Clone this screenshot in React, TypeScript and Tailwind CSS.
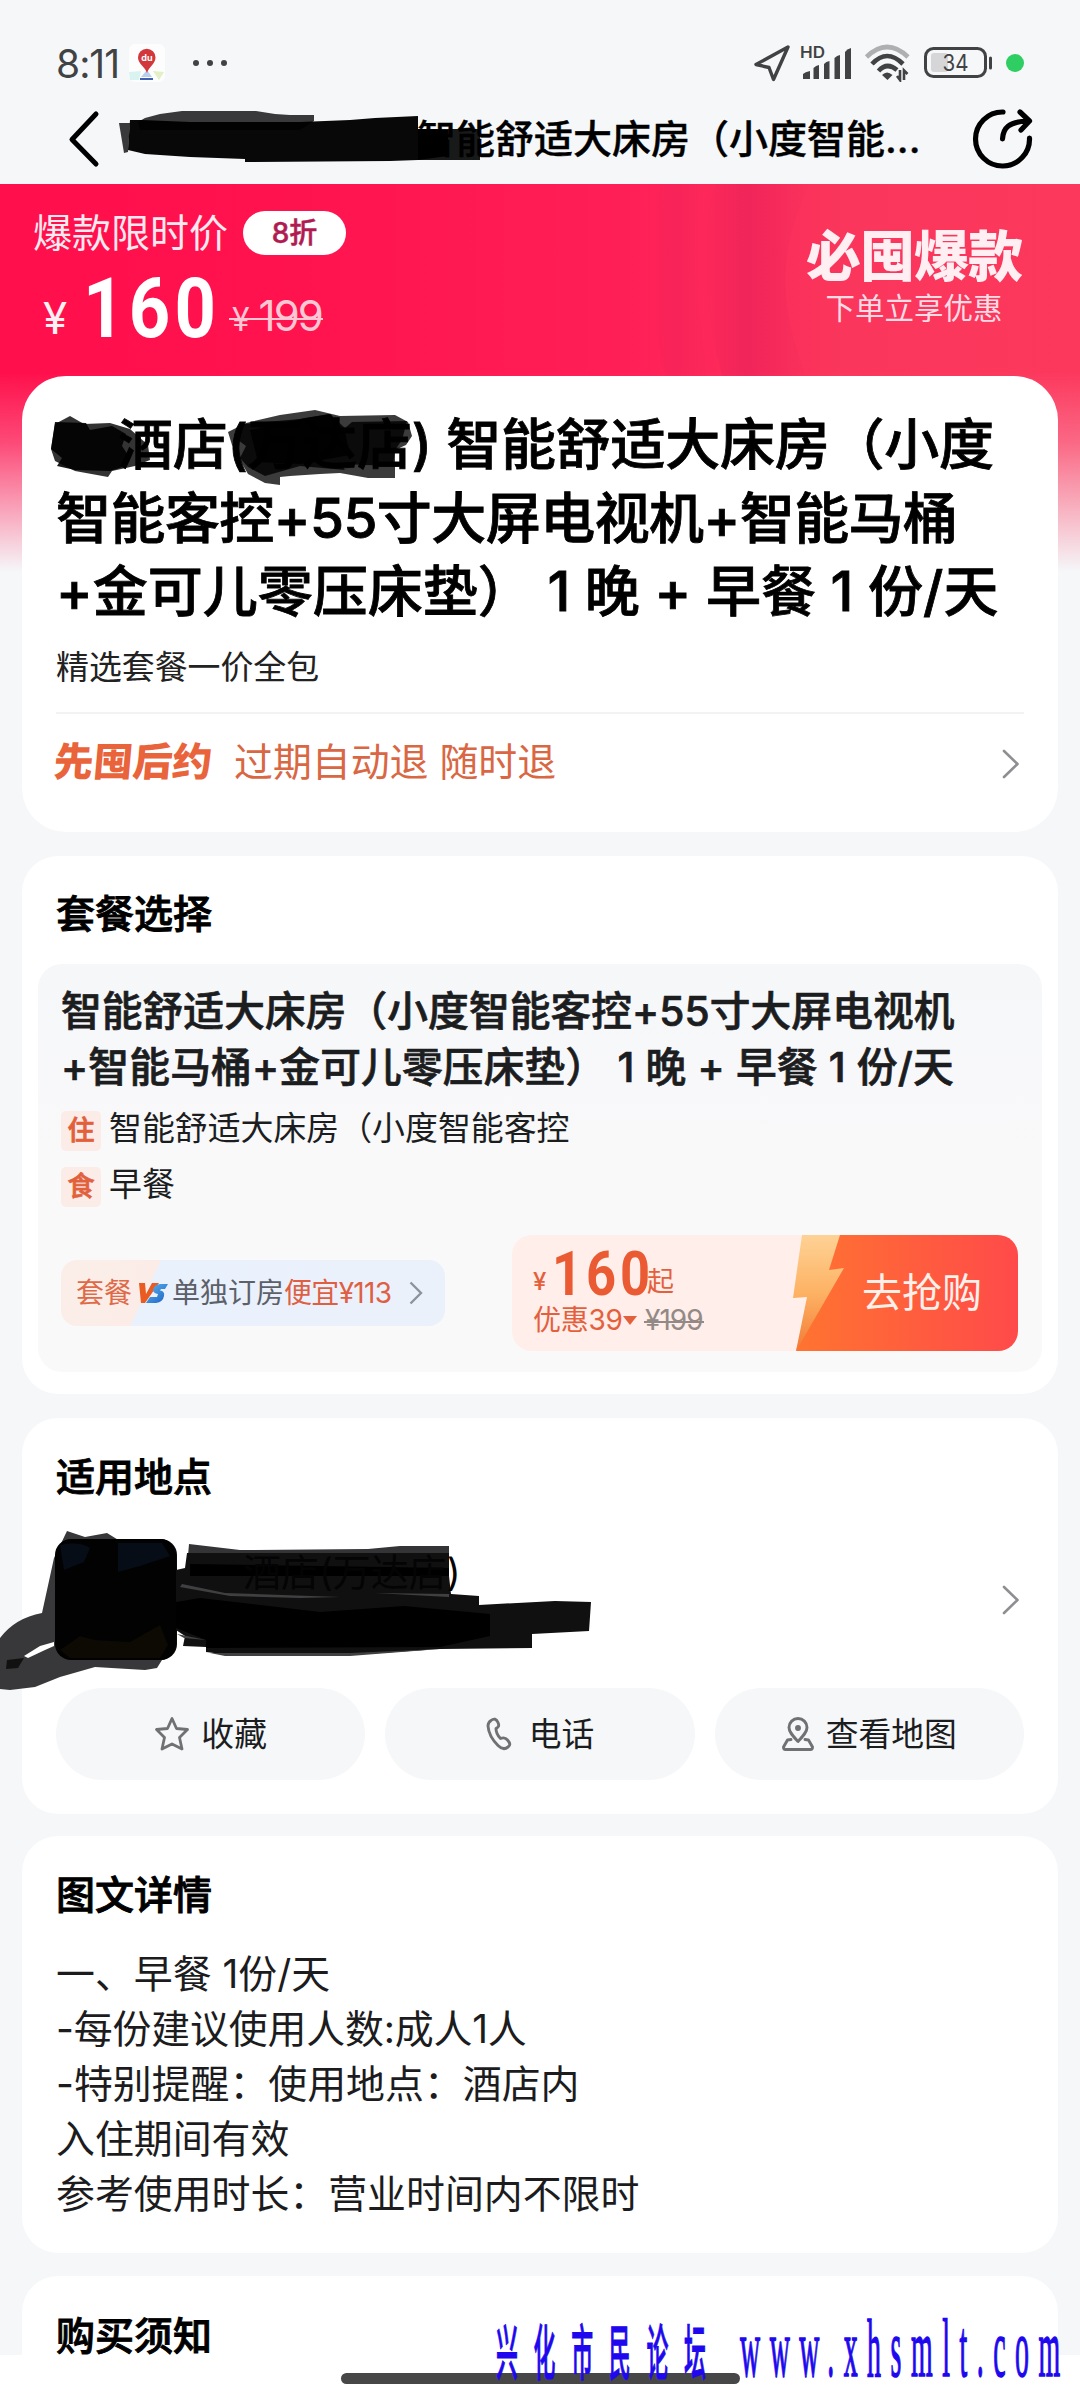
import React from "react";

const FONT = "font-['Inter','Noto_Sans_CJK_SC',sans-serif]";

function Chevron({ className }: { className?: string }) {
  return (
    <svg className={className} width="18" height="30" viewBox="0 0 18 30" fill="none" stroke="#8f8f93" strokeWidth="2.6" strokeLinecap="round" strokeLinejoin="round">
      <path d="M2 2 L15.5 15 L2 28" />
    </svg>
  );
}

function StatusBar() {
  return (
    <div className="flex h-[94px] items-center pt-[32px] pl-[56px] pr-[56px] text-[#414244]">
      <span className="w-[63px] text-[39px] leading-none tracking-[-1px]">8:11</span>
      <svg className="ml-[10px]" width="36" height="38" viewBox="0 0 36 38">
        <rect width="36" height="38" rx="6" fill="#fdfdfd" />
        <path d="M0 28 L12 27 L10 36 L1 36Z" fill="#d9f3f1" />
        <path d="M24 27 L35 28 L30 36Z" fill="#e3efc4" />
        <path d="M18 26 L23 33 H12Z" fill="#b9cfee" />
        <path d="M11 34 H24 V36 H11Z" fill="#3f62b0" />
        <path d="M18 29 C16.500 23 9 20 9 13.500 A8.700 8.700 0 0 1 26.500 13.500 C26.500 20 19.500 23 18 29Z" fill="#d2373b" />
        <text x="18" y="17" textAnchor="middle" fontSize="9" fontWeight="700" fill="#fff" fontFamily="Inter">du</text>
      </svg>
      <div className="ml-[28px] flex gap-[8px]">
        <i className="size-[6px] rounded-full bg-[#414244]" />
        <i className="size-[6px] rounded-full bg-[#414244]" />
        <i className="size-[6px] rounded-full bg-[#414244]" />
      </div>
      <div className="ml-auto flex items-center">
        <svg width="38" height="38" viewBox="0 0 38 38" fill="none" stroke="#414244" strokeWidth="3.4" strokeLinejoin="round">
          <path d="M35 3 L3 20.500 L16 23.500 L20.500 35.500Z" />
        </svg>
        <svg className="ml-[8px] overflow-visible" width="54" height="36" viewBox="0 0 54 36">
          <text x="1" y="13" fontSize="15.500" fontWeight="600" fill="#414244" fontFamily="Inter" textLength="25" lengthAdjust="spacingAndGlyphs">HD</text>
          <g fill="#414244">
            <path d="M4 34 V29 Q6 27 11 26 V34Z" />
            <path d="M14.500 34 V23 Q17 20.500 20 20 V34Z" />
            <path d="M25 34 V19 Q27 16.500 30.500 16 V34Z" />
            <path d="M35.500 34 V13 Q38 10.500 41 10 V34Z" />
            <path d="M46 34 V7 Q48 4 52 3 V34Z" />
          </g>
        </svg>
        <svg className="ml-[11px]" width="48" height="38" viewBox="0 0 48 38" fill="none" strokeWidth="4.600">
          <path d="M2.500 13 Q23 -7 44 13" stroke="#aeafb1" />
          <path d="M8 20 Q23 4 39 20" stroke="#414244" />
          <path d="M14.500 27 Q23 17.500 33 26" stroke="#414244" />
          <path d="M18 31 Q23 26 28.500 31 L23.500 36Z" fill="#414244" />
          <path d="M36 26 V36 L33 32 M40 36 V26.500 L43.500 30" stroke="#414244" strokeWidth="2.600" />
        </svg>
        <svg className="ml-[12px]" width="70" height="32" viewBox="0 0 70 32">
          <rect x="1.500" y="1.500" width="60" height="28" rx="8" fill="none" stroke="#414244" strokeWidth="3" />
          <rect x="7" y="6" width="17" height="19" rx="3" fill="#d6d6d8" />
          <path d="M66.500 11 V21" stroke="#414244" strokeWidth="3" strokeLinecap="round" />
          <text x="31.500" y="24" textAnchor="middle" fontSize="23" fill="#414244" fontFamily="Inter" textLength="26" lengthAdjust="spacingAndGlyphs">34</text>
        </svg>
        <i className="ml-[12px] size-[18px] rounded-full bg-[#2fce62]" />
      </div>
    </div>
  );
}

function NavBar() {
  return (
    <div className="flex h-[90px] items-center pl-[67px] pr-[44px]">
      <svg width="34" height="58" viewBox="0 0 34 58" fill="none" stroke="#000" strokeWidth="5" strokeLinecap="round" strokeLinejoin="round">
        <path d="M29 4 L5 29.500 L29 54" />
      </svg>
      <div className="ml-[316px] w-[508px] whitespace-nowrap text-[39px] font-medium leading-[50px] text-black [-webkit-text-stroke:0.4px_#000]">智能舒适大床房（小度智能...</div>
      <svg className="ml-auto" width="64" height="62" viewBox="0 0 64 62" fill="none" stroke="#000" strokeWidth="5.200" strokeLinecap="round" strokeLinejoin="round">
        <path d="M31 4 A27 27 0 1 0 57.500 30" />
        <path d="M30.500 31 C31 20 37 13.500 56 13 M48 4 L57.500 13 L49 22" />
      </svg>
    </div>
  );
}

function Hero() {
  return (
    <div className="relative h-[192px]">
      <div className="absolute inset-x-0 top-0 h-[388px] overflow-hidden bg-[linear-gradient(90deg,#ff0f4b_0%,#ff124e_25%,#ff1f57_58%,#fa365c_78%,#fc385d_100%)]">
        <svg width="1080" height="388" viewBox="0 0 1080 388" fill="none">
          <defs>
            <linearGradient id="arcA" x1="0" x2="1">
              <stop offset="0" stopColor="#e8205a" stopOpacity="0" />
              <stop offset=".4" stopColor="#e8205a" stopOpacity=".6" />
              <stop offset="1" stopColor="#e8205a" stopOpacity="0" />
            </linearGradient>
          </defs>
          <path d="M715 0 C695 60 705 140 725 200 L810 200 C775 120 780 60 810 0Z" fill="url(#arcA)" />
          <path d="M660 0 C646 60 650 140 668 200 L710 200 C695 120 690 60 700 0Z" fill="url(#arcA)" opacity=".5" />
        </svg>
        <div className="absolute inset-x-0 bottom-0 h-[200px] bg-[linear-gradient(180deg,rgba(245,247,249,0)_0%,rgba(245,247,249,.25)_35%,rgba(245,247,249,1)_100%)]" />
      </div>
      <div className="relative flex justify-between pl-[33px] pr-[56px]">
        <div>
          <div className="mt-[26px] flex items-center">
            <span className="w-[210px] whitespace-nowrap text-[39px] leading-[46px] text-[#ffe9f0]">爆款限时价</span>
            <span className="flex h-[44px] w-[103px] items-center justify-center rounded-full bg-white text-[28px] font-medium leading-none text-[#b01c52] [-webkit-text-stroke:0.5px_#b01c52]">8折</span>
          </div>
          <div className="mt-[14px] flex h-[76px] items-center text-[#fff0f4]">
            <span className="ml-[10px] mt-[19px] inline-block w-[40px] text-[44px] leading-none">¥</span>
            <span className="w-[130px] origin-left font-['Roboto'] text-[84px] font-bold leading-none tracking-[5px] text-white [transform:translateY(1px)_scaleX(.86)]">160</span>
            <span className="relative ml-[19px] mt-[16px] text-[42px] leading-none tracking-[-2px] text-[#ffc6d4]">
              <span className="mr-[11px] inline-block text-[32px]">¥</span>199
              <i className="absolute -left-[3px] -right-[1px] top-[23px] h-[2px] bg-[#ffc6d4]" />
            </span>
          </div>
        </div>
        <div className="flex w-[220px] flex-col items-center pt-[44px]">
          <div className="whitespace-nowrap text-[55px] font-black leading-[56px] tracking-[-1px] text-[#ffeef2]">必囤爆款</div>
          <div className="mt-[7px] whitespace-nowrap text-[29.500px] leading-[34px] text-[#ffdbe4]">下单立享优惠</div>
        </div>
      </div>
    </div>
  );
}

function TitleCard() {
  return (
    <section className="relative mx-[22px] h-[456px] rounded-[44px] bg-white px-[34px] pt-[32px]">
      <h1 className="whitespace-nowrap text-[55px] font-medium leading-[73.500px] text-black [-webkit-text-stroke:0.8px_#000]">
        <div className="pl-[62px] tracking-[-0.250px]">酒店(万达店) 智能舒适大床房（小度</div>
        <div className="tracking-[-0.550px]">智能客控+55寸大屏电视机+智能马桶</div>
        <div>+金可儿零压床垫） 1 晚 + 早餐 1 份/天</div>
      </h1>
      <p className="mt-[18px] text-[32.900px] leading-[40px] text-[#222]">精选套餐一价全包</p>
      <hr className="mt-[25px] border-t-2 border-[#f3f3f4]" />
      <div className="mt-[22px] flex h-[52px] items-center text-[#d96744]">
        <b className="-ml-[2px] inline-block w-[180px] whitespace-nowrap text-[39.500px] font-black leading-[52px] text-[#e9633b] [transform:skewX(-5deg)]">先囤后约</b>
        <span className="text-[38.900px] leading-[52px]">过期自动退 随时退</span>
        <Chevron className="ml-auto mr-[4px] mt-[5px]" />
      </div>
    </section>
  );
}

function Badge({ children }: { children: React.ReactNode }) {
  return <span className="mt-[1px] flex size-[40px] items-center justify-center rounded-[5px] bg-[#fbece8] text-[27px] font-medium leading-none text-[#e2603c] [-webkit-text-stroke:0.7px_#e2603c]">{children}</span>;
}

function SectionTitle({ children }: { children: React.ReactNode }) {
  return <h2 className="text-[39px] font-medium leading-[50px] text-black [-webkit-text-stroke:0.9px_#000]">{children}</h2>;
}

function PackageCard() {
  return (
    <section className="mx-[22px] mt-[24px] h-[538px] rounded-[36px] bg-white px-[16px] pt-[33px]">
      <div className="ml-[18px]">
        <SectionTitle>套餐选择</SectionTitle>
      </div>
      <div className="mt-[25px] h-[408px] rounded-[24px] bg-[linear-gradient(180deg,#f6f7f9_0%,#f9f9fa_50%,#f9f9f9_100%)] pl-[23px] pr-[24px] pt-[20px]">
        <div className="whitespace-nowrap text-[40.700px] font-medium leading-[55.500px] text-[#1c1d1f] [-webkit-text-stroke:0.7px_#1c1d1f]">
          <div className="tracking-[0.100px]">智能舒适大床房（小度智能客控+55寸大屏电视机</div>
          <div className="tracking-[0.200px]">+智能马桶+金可儿零压床垫） 1 晚 + 早餐 1 份/天</div>
        </div>
        <div className="mt-[15px] flex h-[40px] items-center gap-[8px] text-[32.900px] leading-[40px] text-[#1c1d1f]">
          <Badge>住</Badge>
          <span className="-mt-[5px]">智能舒适大床房（小度智能客控</span>
        </div>
        <div className="mt-[16px] flex h-[40px] items-center gap-[8px] text-[32.900px] leading-[40px] text-[#1c1d1f]">
          <Badge>食</Badge>
          <span className="-mt-[5px]">早餐</span>
        </div>
        <div className="mt-[29px] flex items-center justify-between">
          <div className="flex h-[66px] w-[384px] items-center rounded-[16px] bg-[linear-gradient(115deg,#fbeee9_0%,#fbece7_24%,#e9f1fc_24.300%,#ebf1fb_100%)] pl-[15px] text-[28px] leading-[40px]">
            <span className="text-[#df6a47]">套餐</span>
            <svg className="mx-[3px]" width="34" height="24" viewBox="0 0 34 24">
              <defs>
                <linearGradient id="vs" x1="0" x2="1" y1="0" y2="1"><stop offset="0" stopColor="#5db7ee" /><stop offset="1" stopColor="#1c5fc4" /></linearGradient>
              </defs>
              <path d="M4 2 H10 L11 13 L17 2 H24 L10 22 H6Z" fill="#ea5b22" />
              <path d="M33 3 H25 Q19 4 18 9 Q18 12 23 13 L22 16 H15 L11 22 H21 Q28 21 29 15 Q30 10 25 9.500 L26 8 H30Z" fill="url(#vs)" />
            </svg>
            <span className="text-[#5c6069]">单独订房</span>
            <span className="whitespace-nowrap tracking-[-0.700px] text-[#df5f43]">便宜¥113</span>
            <svg className="ml-auto mr-[22px]" width="14" height="24" viewBox="0 0 14 24" fill="none" stroke="#8e939b" strokeWidth="2.400"><path d="M1.500 1.500 L12 12 L1.500 22.500" /></svg>
          </div>
          <div className="relative flex h-[116px] w-[506px] items-center overflow-hidden rounded-[20px] bg-[#ffeeea]">
            <svg className="absolute right-0 top-0" width="228" height="116" viewBox="0 0 228 116">
              <defs>
                <linearGradient id="go" x1="0" x2="1"><stop offset="0" stopColor="#ff7430" /><stop offset="1" stopColor="#ff4a4a" /></linearGradient>
                <linearGradient id="bolt" x1="0" x2="0" y1="0" y2="1"><stop offset="0" stopColor="#fed295" /><stop offset=".5" stopColor="#fdb264" /><stop offset="1" stopColor="#f27a35" /></linearGradient>
              </defs>
              <path d="M40 0 H228 V116 H6 Z" fill="url(#go)" />
              <path d="M12 0 H50 L39 35 L54 33 L6 116 L17 62 L3 63Z" fill="url(#bolt)" />
            </svg>
            <div className="relative w-[350px] pl-[21px] text-[#e4603d]">
              <div className="flex h-[50px] items-center">
                <span className="mt-[18px] w-[19px] text-[24px] font-medium leading-none">¥</span>
                <span className="flex w-[95px]">
                  <span className="origin-left font-['Roboto'] text-[61px] font-bold leading-none tracking-[4.500px] text-[#ea5a33] [transform:translateY(1px)_scaleX(.86)]">160</span>
                </span>
                <span className="relative mt-[16px] text-[27px] leading-none">起</span>
              </div>
              <div className="mt-[4px] flex h-[36px] items-center text-[28px] leading-none">
                <span className="w-[90px] whitespace-nowrap tracking-[-0.300px]">优惠39</span>
                <svg width="14" height="9" viewBox="0 0 14 9"><path d="M0 0 H14 L7 9Z" fill="#e4603d" /></svg>
                <span className="relative ml-[8px] tracking-[-1px] text-[#938a86]">¥199<i className="absolute -inset-x-[1px] top-[15px] h-[2px] bg-[#938a86]" /></span>
              </div>
            </div>
            <span className="relative whitespace-nowrap text-[40px] leading-none text-[#fff0ea]">去抢购</span>
          </div>
        </div>
      </div>
    </section>
  );
}

function ActionButton({ children }: { children: React.ReactNode }) {
  return <div className="flex h-[92px] flex-1 items-center justify-center rounded-full bg-[#f6f7f8] text-[32.800px] leading-[40px] text-[#1c1d1f]">{children}</div>;
}

function LocationCard() {
  return (
    <section className="mx-[22px] mt-[24px] h-[396px] rounded-[36px] bg-white px-[34px] pt-[34px]">
      <SectionTitle>适用地点</SectionTitle>
      <div className="mt-[37px] flex h-[121px]">
        <div className="size-[121px] rounded-[16px] bg-[linear-gradient(180deg,#0a1320_0%,#020202_35%,#020202_60%,#141006_100%)]" />
        <div className="relative z-10 ml-[66px] mt-[11px] h-[50px] whitespace-nowrap text-[38px] leading-[44px] text-[#040404]">酒店(万达店)</div>
        <Chevron className="ml-auto mr-[4px] mt-[46px]" />
      </div>
      <div className="mt-[28px] flex gap-[20px]">
        <ActionButton>
          <svg className="mr-[11px]" width="36" height="36" viewBox="0 0 36 36" fill="none" stroke="#707173" strokeWidth="2.800" strokeLinejoin="round">
            <path d="M18 2.500 L22.500 12.500 L33.500 13.500 L25.500 21.500 L28 33 L18 28 L8 33 L10.500 21.500 L2.500 13.500 L13.500 12.500Z" />
          </svg>
          收藏
        </ActionButton>
        <ActionButton>
          <svg className="mr-[17px]" width="26" height="34" viewBox="0 0 26 34" fill="none" stroke="#707173" strokeWidth="2.900" strokeLinejoin="round">
            <path d="M5 3.500 C8 1 10.500 2 12 5.500 C13.500 9 12.500 10 10 11.500 C10 15 12 19 14.500 21.500 C17 20.500 19.500 20.500 21.500 23 C24.500 26.500 24.500 28 22 30 C19 32.500 15.500 32 12 28.500 C6 22.500 2.500 15.500 2 9 C2 6 3.500 4.500 5 3.500Z" />
          </svg>
          电话
        </ActionButton>
        <ActionButton>
          <svg className="mr-[12px]" width="32" height="34" viewBox="0 0 32 34" fill="none" stroke="#707173" strokeWidth="2.900" strokeLinecap="round" strokeLinejoin="round">
            <path d="M16 24.500 C11 19 7 15 7 10.500 A9 9 0 0 1 25 10.500 C25 15 21 19 16 24.500Z" />
            <circle cx="16" cy="11" r="2" fill="#707173" stroke="none" />
            <circle cx="16" cy="11" r="1.500" />
            <path d="M9 22.500 L5.500 23 L1.500 30 Q1.500 32.500 3.500 32.500 H28.500 Q30.500 32.500 30.500 30 L26.500 23 L23 22.500" />
          </svg>
          查看地图
        </ActionButton>
      </div>
    </section>
  );
}

function DetailsCard() {
  return (
    <section className="mx-[22px] mt-[22px] h-[417px] rounded-[36px] bg-white px-[34px] pt-[34px]">
      <SectionTitle>图文详情</SectionTitle>
      <div className="mt-[26px] whitespace-nowrap text-[38.900px] leading-[55px] text-[#1c1c1e]">
        <p>一、早餐 1份/天</p>
        <p className="tracking-[-0.150px]">-每份建议使用人数:成人1人</p>
        <p>-特别提醒：使用地点：酒店内</p>
        <p>入住期间有效</p>
        <p>参考使用时长：营业时间内不限时</p>
      </div>
    </section>
  );
}

function PenMarks() {
  return (
    <svg className="absolute left-0 top-0" width="1080" height="2400" viewBox="0 0 1080 2400">
      <g fill="#39393b">
        <path d="M119 123 L130 123 L128 152 L124 153Z" />
        <path d="M138 122 L145 118 L160 114 L182 111 L256 111 L275 114 L290 115 L314 115 L314 121 L300 130 L140 130Z" />
      </g>
      <path d="M130 120 L142 120 L190 122 L300 122 L350 120 L375 118 L418 116 L418 129 L448 130 L448 156 L418 160 L390 161 L245 162 L245 159 L190 157 L145 154 L128 150Z" fill="#000" fillOpacity=".97" />
      <path d="M418 129 H480 V160 H418Z" fill="#000" fillOpacity=".9" />

      <path d="M51 449 L55 424 L70 416 L84 424 L110 423 L130 429 L148 445 L150 460 L135 466 L112 471 L108 477 L75 471 L55 461Z" fill="#000" fillOpacity=".8" />
      <path d="M55 422 L86 423 L90 430 L112 426 L126 434 L122 446 L130 458 L126 466 L110 471 L75 470 L57 466 L62 458 L51 449Z" fill="#000" fillOpacity=".9" />
      <path d="M228 432 L246 423 L280 415 L315 410 L340 416 L395 415 L408 422 L412 436 L406 445 L395 450 L395 478 L368 478 L340 473 L320 474 L290 476 L280 477 L280 485 L265 483 L248 474 L240 460 L232 445Z" fill="#000" fillOpacity=".77" />
      <path d="M244 424 L300 419 L330 414 L345 428 L352 422 L407 421 L402 440 L395 450 L393 466 L340 464 L345 470 L300 466 L265 476 L248 467 L240 458 L246 446 L238 440Z" fill="#000" fillOpacity=".8" />
      <path d="M250 430 L305 418 L330 414 L345 432 L350 455 L300 464 L258 462Z" fill="#000" fillOpacity=".9" />

      <path d="M0 1638 Q15 1618 42 1613 L54 1558 L67 1531 L85 1537 L107 1533 L120 1541 L176 1560 V1640 L162 1660 L157 1668 L145 1670 L95 1667 L60 1677 L35 1687 L10 1690 L0 1689Z M24 1656 L28 1658 L45 1650 L54 1646 L54 1642 L40 1646Z" fill="#38383a" fillRule="evenodd" />
      <path d="M7 1660 L24 1658 L18 1668 L6 1669Z" fill="#111" />
      <rect x="55" y="1539" width="121" height="121" rx="16" fill="#020202" />
      <path d="M60 1545 Q80 1541 90 1548 L84 1562 L64 1570Z M118 1543 H162 L170 1556 L140 1566 L118 1572Z" fill="#070d17" />
      <path d="M60 1650 L80 1636 L95 1640 L130 1642 L160 1625 L168 1645 L160 1658 H70Z" fill="#0d0a04" />
      <path d="M189 1544 L240 1550 L368 1549 L400 1546 L449 1546 L449 1594 L185 1590Z" fill="#343436" />
      <path d="M187 1553 H449 V1576 L451 1594 L479 1596 V1605 L555 1601 L591 1602 L589 1631 L532 1634 V1648 L440 1649 L350 1655 L230 1655 L206 1652 V1647 L183 1646 L185 1636 L176 1630 V1570 L185 1568Z" fill="#101011" />
      <path d="M176 1602 L200 1598 L320 1612 L404 1606 L490 1614 L490 1636 L440 1647 L206 1648 L206 1640 L176 1628Z M190 1564 L449 1568 L449 1576 L190 1576Z" fill="#000" />
      <path d="M182 1584 L225 1593 L340 1597 L300 1598 L230 1596 L180 1587Z M375 1593 L449 1594 L449 1597 L430 1596Z M177 1634 L206 1640 L184 1638Z M210 1653 L350 1653 L440 1649 L350 1656 L225 1656Z" fill="#404042" />
    </svg>
  );
}

export default function App() {
  return (
    <div className={`relative h-[2400px] w-[1080px] overflow-hidden bg-white ${FONT}`}>
      <div className="h-[2355px] bg-[#f5f7f9]">
        <StatusBar />
        <NavBar />
        <Hero />
        <TitleCard />
        <PackageCard />
        <LocationCard />
        <DetailsCard />
        <section className="mx-[22px] mt-[23px] h-[79px] rounded-t-[36px] bg-white px-[34px] pt-[35px]">
          <SectionTitle>购买须知</SectionTitle>
        </section>
      </div>
      <div className="mx-auto mt-[18px] h-[11px] w-[399px] rounded-full bg-[#474747]" />
      <PenMarks />
      <div className="absolute left-[496px] top-[2309px] origin-left whitespace-nowrap font-['Noto_Sans_CJK_SC',sans-serif] text-[60px] font-medium leading-[80px] tracking-[43px] text-[#2008ee] [transform:scaleX(.365)] [-webkit-text-stroke:1px_#2008ee]">兴化市民论坛</div>
      <div className="absolute left-[740px] top-[2299px] origin-left whitespace-nowrap font-['Liberation_Serif',serif] text-[82px] leading-[100px] tracking-[28px] text-[#2008ee] [transform:scaleX(.34)] [-webkit-text-stroke:1.5px_#2008ee]">www.xhsmlt.com</div>
    </div>
  );
}
